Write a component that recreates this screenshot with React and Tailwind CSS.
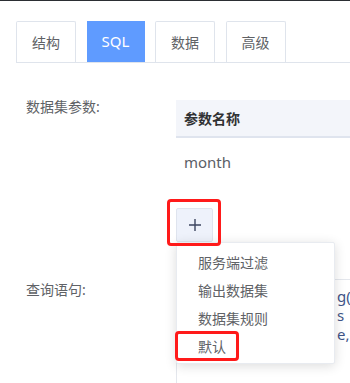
export default function App() {
  const tabs = ["结构", "SQL", "数据", "高级"];
  const menu = ["服务端过滤", "输出数据集", "数据集规则", "默认"];
  return (
    <div className="w-[350px] h-[383px] overflow-hidden bg-white font-['Noto_Sans','Noto_Sans_CJK_SC',sans-serif] text-[14px] text-[#606266]">
      <div className="h-px bg-[#2b2e33]" />
      <div className="pt-[20px] pl-[16px]">
        <div className="flex gap-[10.5px] border-b border-[#dfe4ec]">
          {tabs.map((t, i) => (
            <div
              key={t}
              className={
                i === 1
                  ? "w-[58px] h-[41px] flex items-center justify-center bg-[#5f9bff] text-white text-[15px]"
                  : "w-[60px] h-[41px] flex items-center justify-center border-t border-l border-r border-[#dfe4ec] rounded-t-[2px] text-[#606266] text-[14px]"
              }
            >
              {t}
            </div>
          ))}
        </div>
      </div>

      <div className="mt-[37px] flex">
        <div className="w-[176px] pl-[26px] leading-[14px]">数据集参数:</div>
        <div className="flex-1 flex flex-col">
          <div className="h-[36px] bg-[#f3f5fa] flex items-center pl-[8px] font-bold text-[#303133]">参数名称</div>
          <div className="h-[2px] bg-[#dfe4ee]" />
          <div className="h-[48px] flex items-center pl-[8px] text-[15px] text-[#5a5e66]">month</div>
          <div className="mt-[22px] relative w-[37px] h-[34px]">
            <div className="w-[37px] h-[34px] bg-[#eef2fb] border border-[#dfe4ee] rounded-[2px] flex items-center justify-center">
              <svg width="14" height="14" viewBox="0 0 14 14">
                <path d="M7 1v12M1 7h12" stroke="#3d4660" strokeWidth="1.4" />
              </svg>
            </div>
            <div className="absolute left-[-9px] top-[-9px] w-[54px] h-[47px] border-[3px] border-[#ff1a1a] rounded-[4px] z-20" />
            <div className="absolute left-0 top-[34px] w-[159px] h-[122px] bg-white border border-[#e8ebf0] rounded-[2px] shadow-[0_2px_12px_rgba(0,0,0,0.14)] pt-[5px] z-10">
              {menu.map((m) => (
                <div key={m} className="h-[28px] flex items-center pl-[21px] text-[#606266] whitespace-nowrap">
                  {m}
                </div>
              ))}
              <div className="absolute left-[-2px] top-[88px] w-[64px] h-[30px] border-[3px] border-[#ff1a1a] rounded-[4px]" />
            </div>
          </div>
        </div>
      </div>

      <div className="mt-[37px] flex">
        <div className="w-[176px] pl-[26px] pt-[4px] leading-[14px]">查询语句:</div>
        <div className="flex-1 h-[120px] border-t border-l border-[#e4e7ed] pt-[7px] pl-[160px] leading-[19px] text-[15px] text-[#3f5588] whitespace-nowrap overflow-hidden">
          <div>g(s</div>
          <div>s</div>
          <div>
            e,<span className="text-[#e0883a]"> '</span>
          </div>
        </div>
      </div>
    </div>
  );
}
